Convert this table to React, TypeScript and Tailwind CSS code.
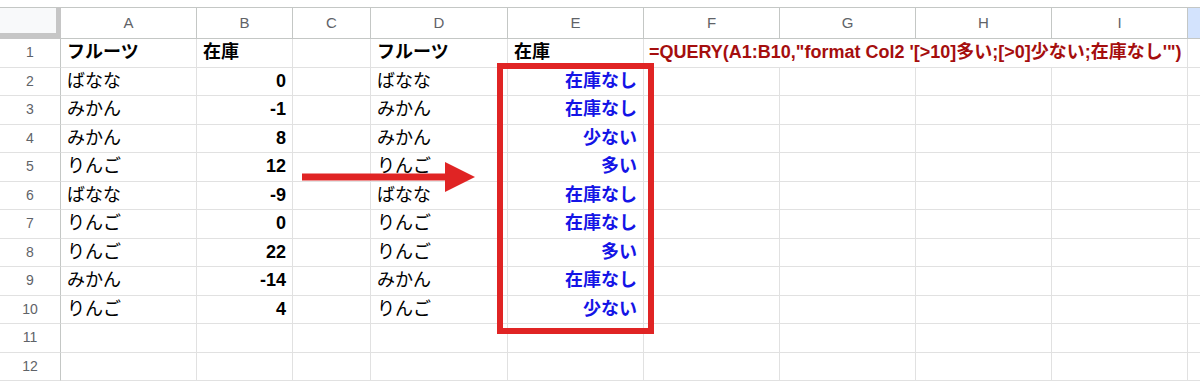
const COLS = ["A", "B", "C", "D", "E", "F", "G", "H", "I"];

const DATA: [string, number, string, string][] = [
  ["ばなな", 0, "ばなな", "在庫なし"],
  ["みかん", -1, "みかん", "在庫なし"],
  ["みかん", 8, "みかん", "少ない"],
  ["りんご", 12, "りんご", "多い"],
  ["ばなな", -9, "ばなな", "在庫なし"],
  ["りんご", 0, "りんご", "在庫なし"],
  ["りんご", 22, "りんご", "多い"],
  ["みかん", -14, "みかん", "在庫なし"],
  ["りんご", 4, "りんご", "少ない"],
];

const GRID = "grid grid-cols-[61px_136px_96px_78px_137px_136px_136px_136px_136px_136px_1fr]";
const CELL = "h-[28.5px] border-r border-b border-[#e1e1e1] flex items-center px-[6px] overflow-hidden whitespace-nowrap";
const FONT = "font-['Liberation_Sans','Noto_Sans_CJK_JP',sans-serif]";

function RowNum({ n }: { n: number }) {
  return (
    <div className="h-[28.5px] border-r border-b border-r-[#c4c7c5] border-b-[#e1e1e1] flex items-center justify-center text-[14px] text-[#5f6368]">
      {n}
    </div>
  );
}

function EmptyTail({ from }: { from: number }) {
  return (
    <>
      {COLS.slice(from).map((c) => (
        <div key={c} className={CELL} />
      ))}
      <div className="h-[28.5px] border-b border-[#e1e1e1]" />
    </>
  );
}

export default function App() {
  return (
    <div className={`relative w-[1200px] h-[382px] overflow-hidden bg-white pt-[7px] ${FONT}`}>
      <div className={GRID}>
        {/* column headers */}
        <div className="h-[32px] bg-[#f8f9fa] border-t border-[#c4c7c5] border-r-[5px] border-b-[6px] border-r-[#c6c6c6] border-b-[#c6c6c6]" />
        {COLS.map((c) => (
          <div
            key={c}
            className="h-[32px] border-t border-r border-b border-[#c4c7c5] flex items-center justify-center text-[15px] text-[#5f6368]"
          >
            {c}
          </div>
        ))}
        <div className="h-[32px] border-t border-b border-[#c4c7c5] bg-[#d3e3fd]" />

        {/* row 1 */}
        <RowNum n={1} />
        <div className={`${CELL} text-[18px] font-bold text-black`}>フルーツ</div>
        <div className={`${CELL} text-[18px] font-bold text-black`}>在庫</div>
        <div className={CELL} />
        <div className={`${CELL} text-[18px] font-bold text-black`}>フルーツ</div>
        <div className={`${CELL} text-[18px] font-bold text-black`}>在庫</div>
        <div className="relative h-[28.5px] border-b border-[#e1e1e1]">
          <span className="absolute left-[5px] top-0 h-full flex items-center whitespace-nowrap text-[18px] font-bold text-[#a50e0e]">
            =QUERY(A1:B10,"format Col2 '[&gt;10]多い;[&gt;0]少ない;在庫なし'")
          </span>
        </div>
        <div className="h-[28.5px] border-b border-[#e1e1e1]" />
        <div className="h-[28.5px] border-b border-[#e1e1e1]" />
        <div className={CELL} />
        <div className="h-[28.5px] border-b border-[#e1e1e1]" />

        {/* data rows */}
        {DATA.map(([fruit, qty, fruit2, label], i) => (
          <div key={i} className="contents">
            <RowNum n={i + 2} />
            <div className={`${CELL} text-[18px] text-black`}>{fruit}</div>
            <div className={`${CELL} justify-end text-[18px] font-bold text-black`}>{qty}</div>
            <div className={CELL} />
            <div className={`${CELL} text-[18px] text-black`}>{fruit2}</div>
            <div className={`${CELL} justify-end text-[18px] font-bold text-[#1414e6]`}>{label}</div>
            <EmptyTail from={5} />
          </div>
        ))}

        {/* empty rows */}
        {[11, 12].map((n) => (
          <div key={n} className="contents">
            <RowNum n={n} />
            <EmptyTail from={0} />
          </div>
        ))}
      </div>

      {/* highlight box */}
      <div className="absolute left-[497px] top-[63px] w-[157px] h-[271px] border-[6px] border-[#e02424]" />

      {/* arrow */}
      <svg className="absolute left-[300px] top-[160px]" width="180" height="34" viewBox="0 0 180 34">
        <rect x="2" y="13.5" width="146" height="7" fill="#e02424" />
        <polygon points="145,2 175,17 145,32" fill="#e02424" />
      </svg>
    </div>
  );
}
